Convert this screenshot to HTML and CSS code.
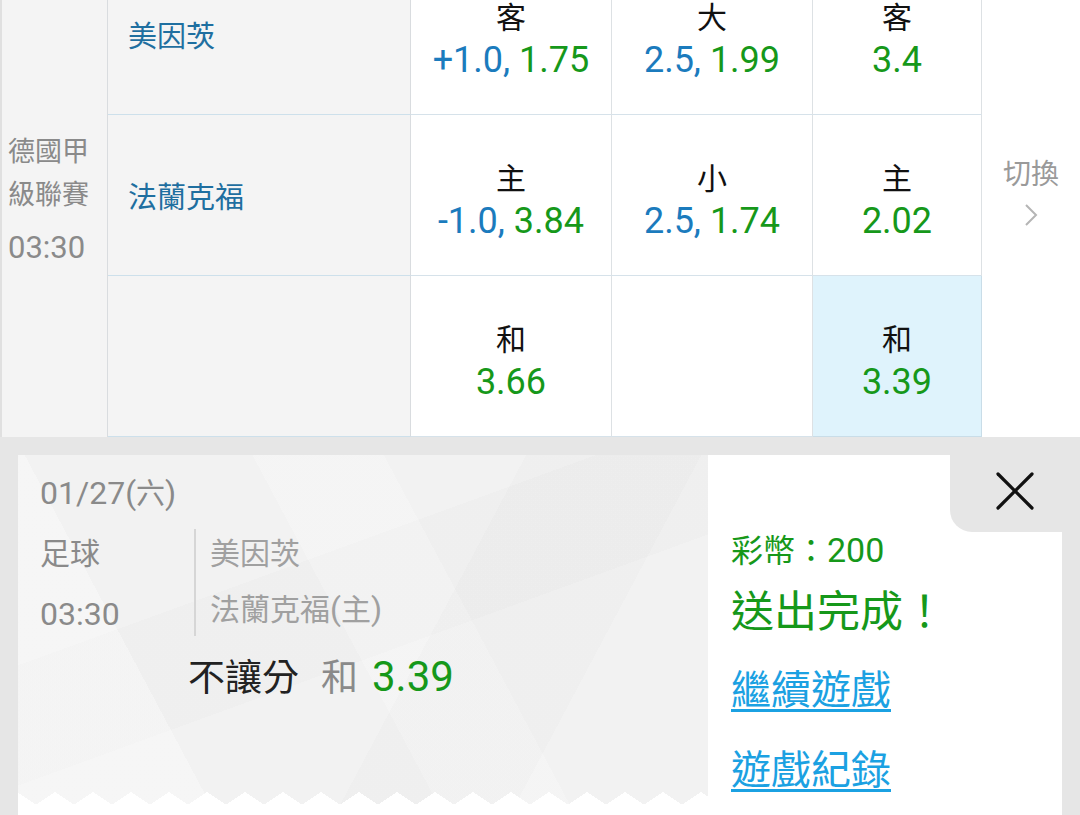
FILE: index.html
```html
<!DOCTYPE html>
<html lang="zh-Hant">
<head>
<meta charset="utf-8">
<title>投注完成</title>
<link rel="stylesheet" href="styles.css">
</head>
<body>
<div class="board">
  <div class="grid">
    <div class="league">
      <span>德國甲</span>
      <span>級聯賽</span>
      <span class="ltime">03:30</span>
    </div>

    <div class="team r1">美因茨</div>
    <div class="odd r1 c3"><span class="lab">客</span><span class="val"><span class="b">+1.0,</span> <span class="g">1.75</span></span></div>
    <div class="odd r1 c4"><span class="lab">大</span><span class="val"><span class="b">2.5,</span> <span class="g">1.99</span></span></div>
    <div class="odd r1 c5"><span class="lab">客</span><span class="val"><span class="g">3.4</span></span></div>

    <div class="team r2">法蘭克福</div>
    <div class="odd r2 c3"><span class="lab">主</span><span class="val"><span class="b">-1.0,</span> <span class="g">3.84</span></span></div>
    <div class="odd r2 c4"><span class="lab">小</span><span class="val"><span class="b">2.5,</span> <span class="g">1.74</span></span></div>
    <div class="odd r2 c5"><span class="lab">主</span><span class="val"><span class="g">2.02</span></span></div>

    <div class="team r3"></div>
    <div class="odd r3 c3"><span class="lab">和</span><span class="val"><span class="g">3.66</span></span></div>
    <div class="odd r3 c4"></div>
    <div class="odd r3 c5 selected"><span class="lab">和</span><span class="val"><span class="g">3.39</span></span></div>

    <div class="switch">
      <span>切換</span>
      <svg class="chev" width="14" height="24" viewBox="0 0 14 24"><polyline points="2,2 12,12 2,22" fill="none" stroke="#b5b5b5" stroke-width="2"/></svg>
    </div>
  </div>
</div>

<div class="overlay">
  <div class="card">
    <div class="ticket">
      <div class="date"><span class="num">01/27(</span>六<span class="num">)</span></div>
      <div class="meta">
        <div class="meta-left">
          <div class="ml1">足球</div>
          <div class="ml2 num">03:30</div>
        </div>
        <div class="meta-right">
          <div class="mr1">美因茨</div>
          <div class="mr2">法蘭克福<span class="num">(</span>主<span class="num">)</span></div>
        </div>
      </div>
      <div class="bet"><span class="bet-type">不讓分</span><span class="bet-pick">和</span><span class="bet-odd">3.39</span></div>
    </div>
    <div class="info">
      <div class="coins">彩幣：<span class="cnum">200</span></div>
      <div class="done">送出完成！</div>
      <a class="link l1" href="#">繼續遊戲</a>
      <a class="link l2" href="#">遊戲紀錄</a>
    </div>
    <div class="close">
      <svg width="38" height="38" viewBox="0 0 38 38"><line x1="2" y1="2" x2="36" y2="36" stroke="#111" stroke-width="3.2" stroke-linecap="round"/><line x1="36" y1="2" x2="2" y2="36" stroke="#111" stroke-width="3.2" stroke-linecap="round"/></svg>
    </div>
  </div>
</div>
</body>
</html>
```
FILE: styles.css
```css
* { box-sizing: border-box; }
html, body {
  margin: 0;
  padding: 0;
}
body {
  width: 1080px;
  height: 815px;
  overflow: hidden;
  background: #e6e6e6;
  font-family: Roboto, "Noto Sans CJK TC", "Noto Sans", sans-serif;
}

.board {
  height: 437px;
  overflow: hidden;
  background: #fff;
}
.grid {
  display: grid;
  grid-template-columns: 108px 303px 201px 201px 169px 98px;
  grid-template-rows: repeat(3, 161px);
  margin-top: -46px;
}

.league {
  grid-row: 1 / 4;
  grid-column: 1;
  background: #f4f4f4;
  border-left: 2px solid #e0e0e0;
  border-right: 1px solid #d9dcdf;
  display: flex;
  flex-direction: column;
  justify-content: center;
  padding: 8px 0 0 6px;
  color: #8a8a8a;
  font-size: 27px;
  line-height: 43px;
  white-space: nowrap;
}
.league .ltime {
  margin-top: 9px;
  font-size: 31px;
}

.team {
  grid-column: 2;
  background: #f4f4f4;
  border-bottom: 1px solid #cde0eb;
  border-right: 1px solid #d9dcdf;
  display: flex;
  align-items: center;
  padding-left: 20px;
  color: #1f6fa0;
  font-size: 29px;
}
.r1 { grid-row: 1; }
.r2 { grid-row: 2; }
.r3 { grid-row: 3; }
.c3 { grid-column: 3; }
.c4 { grid-column: 4; }
.c5 { grid-column: 5; }

.odd {
  background: #fff;
  border-bottom: 1px solid #d6e2ea;
  border-right: 1px solid #dde1e4;
  display: flex;
  flex-direction: column;
  align-items: center;
  justify-content: center;
  padding-top: 10px;
}
.odd.selected {
  background: #dff3fc;
  border-color: #c9dde8;
}
.lab {
  color: #111;
  font-size: 30px;
  line-height: 43px;
}
.val {
  font-size: 36px;
  line-height: 43px;
  white-space: nowrap;
}
.b { color: #1b7bbd; }
.g { color: #16981a; }

.switch {
  grid-row: 1 / 4;
  grid-column: 6;
  background: #fff;
  display: flex;
  flex-direction: column;
  align-items: center;
  justify-content: center;
  color: #9a9a9a;
  font-size: 28px;
  line-height: 40px;
  padding-bottom: 10px;
}
.chev {
  margin-top: 8px;
}

.overlay {
  padding: 18px 18px 0 18px;
}
.card {
  position: relative;
  display: flex;
  height: 380px;
  background: #fff;
}
.ticket {
  position: relative;
  width: 690px;
  height: 350px;
  padding: 18px 0 0 22px;
  background:
    linear-gradient(118deg, transparent 58%, rgba(0,0,0,0.012) 58%, rgba(0,0,0,0.012) 78%, transparent 78%),
    linear-gradient(62deg, rgba(255,255,255,0.3) 22%, transparent 22%, transparent 48%, rgba(255,255,255,0.2) 48%, rgba(255,255,255,0.2) 63%, transparent 63%),
    linear-gradient(160deg, transparent 35%, rgba(0,0,0,0.01) 35%, rgba(0,0,0,0.01) 55%, transparent 55%),
    #f2f2f2;
}
.ticket::after {
  content: "";
  position: absolute;
  left: 0;
  right: 0;
  bottom: 0;
  height: 13px;
  background: conic-gradient(from 124deg at 50% 0, #fff 112deg, transparent 0) 18px 0 / 38px 13px repeat-x;
}
.num { font-size: 32px; }
.date {
  color: #8a8a8a;
  font-size: 29px;
  line-height: 40px;
}
.meta {
  display: flex;
  margin-top: 15px;
}
.meta-left {
  width: 154px;
  color: #8a8a8a;
  font-size: 30px;
  line-height: 50px;
}
.ml2 { margin-top: 10px; }
.meta-right {
  border-left: 2px solid #d6d6d6;
  padding-left: 14px;
  height: 107px;
  color: #a0a0a0;
  font-size: 30px;
  line-height: 50px;
}
.mr2 { margin-top: 5px; }
.bet {
  margin: 14px 0 0 148px;
  line-height: 48px;
  font-size: 37px;
  white-space: nowrap;
}
.bet-type { color: #222; }
.bet-pick { color: #8a8a8a; margin-left: 22px; }
.bet-odd { color: #16981a; font-size: 42px; margin-left: 14px; }

.info {
  flex: 1;
  display: flex;
  flex-direction: column;
  align-items: flex-start;
  padding: 73px 0 0 23px;
}
.coins {
  color: #16981a;
  font-size: 32px;
  line-height: 44px;
}
.cnum { font-size: 34px; }
.done {
  margin-top: 11px;
  color: #16981a;
  font-size: 43px;
  line-height: 56px;
}
.link {
  color: #1ba1e2;
  font-size: 40px;
  line-height: 60px;
  text-decoration: underline;
  text-decoration-thickness: 3px;
  text-underline-offset: 5px;
}
.l1 { margin-top: 21px; }
.l2 { margin-top: 20px; }

.close {
  position: absolute;
  top: 0;
  right: 0;
  width: 112px;
  height: 77px;
  background: #e6e6e6;
  border-bottom-left-radius: 22px;
  padding: 17px 0 0 46px;
}
.close svg { display: block; }
```
